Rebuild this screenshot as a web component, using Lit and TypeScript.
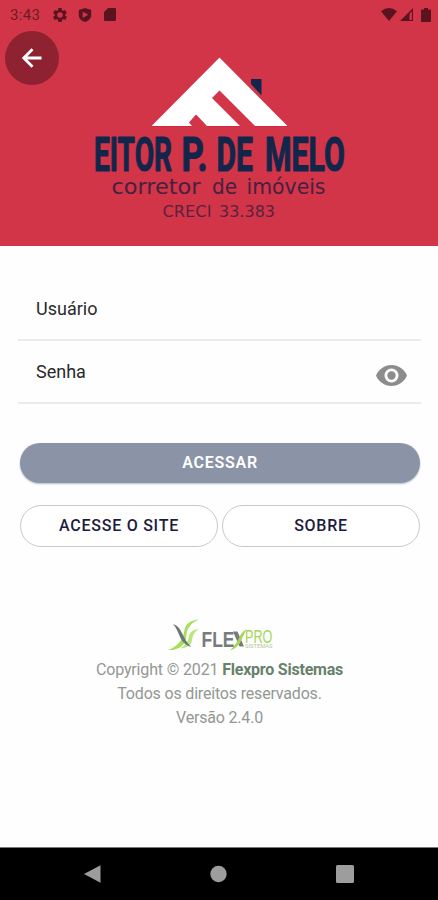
import { LitElement, html, css, svg } from "lit";
import { customElement } from "lit/decorators.js";

type Word = [text: string, x: number, width: number];

const words = (cls: string, y: number, list: Word[]) =>
  list.map(
    ([text, x, width]) => svg`<text class=${cls} x=${x} y=${y} textLength=${width}
      lengthAdjust="spacingAndGlyphs">${text}</text>`
  );

@customElement("status-bar")
class StatusBar extends LitElement {
  static styles = css`
    :host { display: flex; align-items: center; height: 29px; padding: 0 7px 0 10px; box-sizing: border-box; color: #5b141f; }
    .time { font-size: 15px; letter-spacing: 0.3px; width: 43px; color: #6d1b28; }
    svg { display: block; fill: currentColor; }
    .spacer { flex: 1; }
    .gear { margin-right: 11px; }
    .shield { margin-right: 12px; }
    .wifi { margin-right: 3px; }
    .cell { margin-right: 7px; }
  `;
  render() {
    return html`
      <span class="time">3:43</span>
      <svg class="gear" width="14" height="14" viewBox="2 2 20 20"><path d="M19.4 13c0-.3.1-.6.1-1s0-.7-.1-1l2.1-1.600c.2-.2.200-.4.100-.6l-2-3.500c-.1-.2-.4-.3-.6-.2l-2.500 1c-.5-.4-1.100-.7-1.700-1l-.4-2.600c0-.3-.2-.5-.4-.5h-4c-.3 0-.5.2-.5.4l-.4 2.700c-.6.2-1.100.6-1.700 1l-2.500-1c-.2-.1-.5 0-.6.200l-2 3.500c-.1.200-.1.500.1.600L4.500 11c0 .3-.1.600-.1 1s0 .7.1 1l-2.100 1.600c-.2.200-.2.400-.1.600l2 3.500c.1.200.4.300.6.200l2.500-1c.5.400 1.100.7 1.700 1l.4 2.600c0 .3.200.4.500.4h4c.2 0 .5-.2.500-.4l.4-2.600c.6-.3 1.200-.6 1.700-1l2.500 1c.2.100.5 0 .6-.2l2-3.500c.1-.2.100-.5-.1-.6zM12 16a4 4 0 1 1 0-8 4 4 0 0 1 0 8z"/></svg>
      <svg class="shield" width="14" height="14" viewBox="0 0 14 14"><path fill-rule="evenodd" d="M7 0 13.200 2v5c0 3.500-2.700 6-6.200 7C3.500 13 .8 10.500.8 7V2zM4.700 3.700v6.200L10.200 6.800 7.300 5z"/></svg>
      <svg width="12" height="13" viewBox="0 0 12 13"><path d="M4 0h6.500A1.300 1.300 0 0 1 12 1.300v10.400A1.300 1.300 0 0 1 10.700 13H1.300A1.300 1.300 0 0 1 0 11.700V4z"/></svg>
      <span class="spacer"></span>
      <svg class="wifi" width="16" height="13" viewBox="0 0 16 13"><path d="M8 13 0 3.200Q8-3 16 3.200z"/></svg>
      <svg class="cell" width="14" height="13" viewBox="0 0 14 13"><path fill-rule="evenodd" d="M13 0v13H0zM11.900 3.300 9.500 5.700V11.900h2.400z"/></svg>
      <svg width="10" height="14" viewBox="0 0 10 14"><path d="M3 0h4v1.500h2q1 0 1 1V13q0 1-1 1H1q-1 0-1-1V2.500q0-1 1-1h2z"/></svg>
    `;
  }
}

@customElement("app-root")
class AppRoot extends LitElement {
  static styles = css`
    :host { display: flex; flex-direction: column; height: 900px; box-sizing: border-box; background: #fefefe; font-family: Roboto, sans-serif; color: #2a2a2a; overflow: hidden; }
    header { height: 246px; background: #d13547; flex: none; }
    .top { display: flex; height: 217px; }
    .back { display: flex; align-items: center; justify-content: center; flex: none; width: 54px; height: 54px; margin: 2px 0 0 5px; padding: 0; border: 0; border-radius: 50%; background: #8f2230; }
    .brand { display: block; flex: none; width: 270px; height: 190px; margin: 21px 0 0 26px; overflow: visible; }
    .name { font: 700 48px Roboto, sans-serif; fill: #11264a; stroke: #11264a; stroke-width: 1.2px; stroke-linejoin: round; }
    .role { font: 400 21.500px "DejaVu Sans", sans-serif; fill: #472041; }
    .creci { font: 400 16.500px "DejaVu Sans", sans-serif; fill: #5b2140; }
    main { display: flex; flex-direction: column; flex: 1; padding: 32px 17px 0 18px; }
    .field { display: flex; align-items: center; justify-content: space-between; height: 63px; box-sizing: border-box; padding: 0 14px 0 18px; border-bottom: 2px solid #ebebeb; font-size: 18px; }
    .field svg { display: block; margin-top: 7px; }
    .buttons { display: grid; grid-template-columns: 198px 198px; justify-content: space-between; gap: 22px 0; padding: 39px 1px 0 2px; }
    button { font-family: inherit; }
    .pill { height: 42px; padding: 0 0 1px; border-radius: 21px; border: 1px solid #c9c9cc; background: #fff; color: #1c1c40; font-size: 16px; font-weight: 500; letter-spacing: 0.750px; }
    .primary { grid-column: 1 / -1; border: 0; padding-bottom: 2px; background: #8b94a6; color: #fff; height: 40px; box-shadow: 0 1px 2px #aebac6; font-weight: 600; letter-spacing: 0.750px; }
    .legal { display: flex; flex-direction: column; align-items: center; margin-top: 71px; font-size: 16px; line-height: 24px; color: #929892; }
    .legal svg { display: block; margin-bottom: 6px; }
    .legal div { letter-spacing: -0.150px; }
    .legal b { font-weight: 700; color: #66826a; letter-spacing: -0.220px; }
    .legal .wide { letter-spacing: -0.180px; }
    .flex { font: 700 21.500px "Liberation Sans", sans-serif; fill: #777b7d; }
    .pro { font: 400 18px "Liberation Sans", sans-serif; fill: #a4d658; }
    .tiny { font: 400 5.500px Roboto, sans-serif; fill: #b3c69b; }
    nav { display: flex; justify-content: space-between; flex: none; height: 53px; box-sizing: border-box; padding: 17px 84px 0 84px; background: #000; border-top: 1px solid #777; }
    nav svg { display: block; fill: #9d9d9d; }
  `;
  render() {
    return html`
      <header>
        <status-bar></status-bar>
        <div class="top">
          <button class="back" aria-label="Voltar">
            <svg width="22" height="20" viewBox="0 0 22 20" fill="none" stroke="#fff" stroke-width="2.800"><path d="M11.500 1.300 2.800 10l8.700 8.700M3 10h17.500"/></svg>
          </button>
          <svg class="brand" viewBox="85 50 270 190">
            <path fill="#11264a" d="M251 79h10.500v16.500L251 84z"/>
            <path fill="#fff" stroke="#d3213a" stroke-width="1" paint-order="stroke" d="M219.500 57.500 287.500 126H255L219.500 90.500 212 98 240 126H207L196 114.500 189 122.500 192 126H151.500z"/>
            ${words("name", 171, [["EITOR", 94, 78], ["P.", 181.500, 26], ["DE", 216.500, 36.500], ["MELO", 265, 80]])}
            ${words("role", 194, [["corretor", 111.500, 89], ["de", 212, 25], ["imóveis", 246.500, 79]])}
            ${words("creci", 216.800, [["CRECI", 162.500, 49], ["33.383", 219, 56]])}
          </svg>
        </div>
      </header>
      <main>
        <div class="field"><span>Usuário</span></div>
        <div class="field">
          <span>Senha</span>
          <svg width="31" height="21" viewBox="0 0 31 21"><path fill="#8c8c8c" fill-rule="evenodd" d="M15.500 0C8.500 0 2.500 4.300 0 10.500 2.500 16.700 8.500 21 15.500 21S28.500 16.700 31 10.500C28.500 4.300 22.500 0 15.500 0zm0 17.500a7 7 0 1 1 0-14 7 7 0 0 1 0 14zm0-2.800a4.200 4.200 0 1 0 0-8.400 4.200 4.200 0 0 0 0 8.400z"/></svg>
        </div>
        <div class="buttons">
          <button class="pill primary">ACESSAR</button>
          <button class="pill">ACESSE O SITE</button>
          <button class="pill">SOBRE</button>
        </div>
        <div class="legal">
          <svg width="106" height="34" viewBox="168 618 106 34">
            <path fill="#a7df5a" d="M200 619.500c-8 .5-13 4-14.500 10-1 5-1 8-4.500 12-3 4-7 6.500-12 8.500 8 .5 14-2.500 17-8 2-4 .5-9 3.500-14 2.500-4 5.500-6.500 10.500-8.500z"/>
            <path fill="#b8e87a" d="M200 629c-6 .5-9 3-10 7-.5 5-4 10-9 12.500 7-.5 11-3 12-8 .5-5 2.500-9 7-11.500z"/>
            <path fill="#6f7679" d="M174 624c5 1.500 7 5 9.500 10 2 4.500 4.500 9 9 13-6-1.500-9-5-11.500-10-2-5-3.500-9-7-13z"/>
            ${words("flex", 647, [["FLE", 202.500, 33]])}
            <path fill="#777b7d" d="M234 631.500h4.500l6.500 15h-4.500z"/>
            <path fill="#a4d658" d="M247.500 629q-5 3-7.500 9t-9 12.500q8-2.500 11-9.500t5.500-12z"/>
            ${words("pro", 643, [["PRO", 246, 27.500]])}
            ${words("tiny", 648, [["SISTEMAS", 246, 27.500]])}
          </svg>
          <div>Copyright © 2021 <b>Flexpro Sistemas</b></div>
          <div class="wide">Todos os direitos reservados.</div>
          <div class="wide">Versão 2.4.0</div>
        </div>
      </main>
      <nav>
        <svg width="17" height="18" viewBox="0 0 17 18"><path d="M16.500.3v17.400L0 9z"/></svg>
        <svg width="17" height="18" viewBox="0 0 17 18"><circle cx="8.500" cy="9" r="8.200"/></svg>
        <svg width="18" height="18" viewBox="0 0 18 18"><rect width="18" height="18" rx="1.500"/></svg>
      </nav>
    `;
  }
}
